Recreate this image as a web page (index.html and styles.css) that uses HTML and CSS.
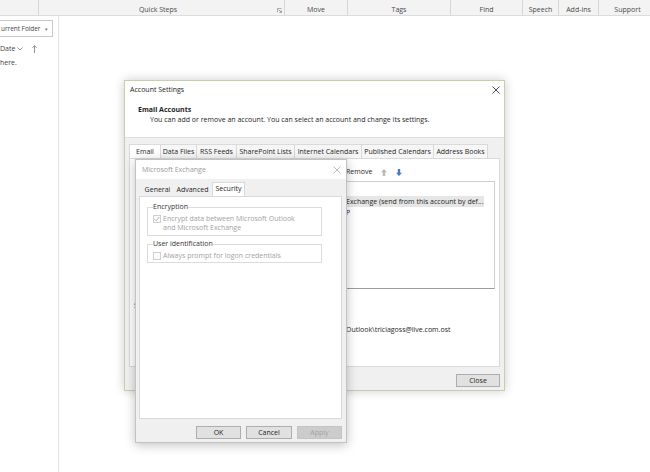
FILE: index.html
```html
<!DOCTYPE html>
<html lang="en">
<head>
<meta charset="utf-8">
<title>Account Settings</title>
<link rel="stylesheet" href="styles.css">
</head>
<body>
<div class="app">
  <header class="ribbon">
    <div class="grp grp-a"></div>
    <div class="grp grp-quick">
      <span class="grp-label">Quick Steps</span>
      <svg class="launcher" width="5" height="5" viewBox="0 0 5 5"><path d="M0.5 4.5V0.5H4.5" fill="none" stroke="#999" stroke-width="0.8"/><path d="M1.6 1.6L4.3 4.3M4.4 2.4V4.4H2.4" fill="none" stroke="#888" stroke-width="0.8"/></svg>
    </div>
    <div class="grp grp-move"><span class="grp-label">Move</span></div>
    <div class="grp grp-tags"><span class="grp-label">Tags</span></div>
    <div class="grp grp-find"><span class="grp-label">Find</span></div>
    <div class="grp grp-speech"><span class="grp-label">Speech</span></div>
    <div class="grp grp-addins"><span class="grp-label">Add-ins</span></div>
    <div class="grp grp-support"><span class="grp-label">Support</span></div>
  </header>

  <main class="workspace">
    <aside class="folder-pane">
      <div class="scope"><span class="scope-text">urrent Folder</span><span class="caret">&#9662;</span></div>
      <div class="sort">
        <span class="sort-text">Date</span>
        <svg class="chev" width="6" height="4" viewBox="0 0 6 4"><path d="M0.5 0.5L3 3L5.5 0.5" fill="none" stroke="#777" stroke-width="0.8"/></svg>
        <svg class="sort-arrow" width="5" height="8" viewBox="0 0 5 8"><path d="M2.5 8V0.8M0.4 2.8L2.5 0.6L4.6 2.8" fill="none" stroke="#777" stroke-width="0.8"/></svg>
      </div>
      <div class="empty">here.</div>
    </aside>
    <section class="reading"></section>
  </main>

  <div class="dlg acct">
    <div class="titlebar">
      <span class="title">Account Settings</span>
      <svg class="close" width="8" height="8" viewBox="0 0 8 8"><path d="M0.5 0.5L7.5 7.5M7.5 0.5L0.5 7.5" stroke="#333" stroke-width="0.9"/></svg>
    </div>
    <div class="hdr">
      <div class="hdr-title">Email Accounts</div>
      <div class="hdr-sub">You can add or remove an account. You can select an account and change its settings.</div>
    </div>
    <div class="acct-body">
      <div class="tabs">
        <div class="tab tab-sel w-email">Email</div>
        <div class="tab w-data">Data Files</div>
        <div class="tab w-rss">RSS Feeds</div>
        <div class="tab w-sp">SharePoint Lists</div>
        <div class="tab w-ic">Internet Calendars</div>
        <div class="tab w-pc">Published Calendars</div>
        <div class="tab w-ab">Address Books</div>
      </div>
      <div class="panel">
        <div class="toolbar">
          <div class="tb-hidden"></div>
          <span class="tb-remove">Remove</span>
          <svg class="tb-arrow" width="6" height="7" viewBox="0 0 6 7"><path d="M3 0L6 3.2H4.2V7H1.8V3.2H0Z" fill="#b9b9b9"/></svg>
          <svg class="tb-arrow" width="6" height="7" viewBox="0 0 6 7"><path d="M3 7L6 3.8H4.2V0H1.8V3.8H0Z" fill="#4a78c8"/></svg>
        </div>
        <div class="listbox">
          <div class="row row-sel"><span class="cell-name"></span><span class="cell-type">Exchange (send from this account by def...</span></div>
          <div class="row"><span class="cell-name"></span><span class="cell-type">P</span></div>
        </div>
        <div class="delivery">
          <div class="delivery-line"><span class="lead">S</span></div>
          <div class="delivery-line"></div>
          <div class="delivery-path"><span class="path-head"></span><span>Outlook\triciagoss@live.com.ost</span></div>
        </div>
      </div>
      <div class="footer acct-footer">
        <button class="btn btn-close">Close</button>
      </div>
    </div>
  </div>

  <div class="dlg exch">
    <div class="titlebar exch-title">
      <span class="title">Microsoft Exchange</span>
      <svg class="close" width="8" height="8" viewBox="0 0 8 8"><path d="M0.5 0.5L7.5 7.5M7.5 0.5L0.5 7.5" stroke="#b5b5b5" stroke-width="0.9"/></svg>
    </div>
    <div class="exch-body">
      <div class="tabs exch-tabs">
        <div class="etab w-gen">General</div>
        <div class="etab w-adv">Advanced</div>
        <div class="etab etab-sel w-sec">Security</div>
      </div>
      <div class="epanel">
        <fieldset class="group group-enc">
          <legend>Encryption</legend>
          <div class="check-row">
            <svg class="cb" width="8" height="8" viewBox="0 0 8 8"><rect x="0.5" y="0.5" width="7" height="7" fill="#fafafa" stroke="#cfcfcf"/><path d="M1.6 4.2L3.2 5.8L6.4 2" fill="none" stroke="#b2b2b2" stroke-width="0.9"/></svg>
            <span class="check-text">Encrypt data between Microsoft Outlook<br>and Microsoft Exchange</span>
          </div>
        </fieldset>
        <fieldset class="group group-user">
          <legend>User identification</legend>
          <div class="check-row">
            <svg class="cb" width="8" height="8" viewBox="0 0 8 8"><rect x="0.5" y="0.5" width="7" height="7" fill="#fafafa" stroke="#cfcfcf"/></svg>
            <span class="check-text">Always prompt for logon credentials</span>
          </div>
        </fieldset>
      </div>
      <div class="footer exch-footer">
        <button class="btn">OK</button>
        <button class="btn btn-cancel">Cancel</button>
        <button class="btn btn-disabled">Apply</button>
      </div>
    </div>
  </div>
</div>
</body>
</html>
```

FILE: styles.css
```css
* { box-sizing: border-box; }
html, body { margin: 0; padding: 0; }
body {
  width: 650px;
  height: 472px;
  overflow: hidden;
  background: #fff;
  font-family: "Open Sans", "Noto Sans", sans-serif;
  font-size: 7px;
  line-height: 10px;
  color: #1e1e1e;
}
.app { position: relative; width: 650px; height: 472px; overflow: hidden; }

/* Ribbon */
.ribbon {
  display: flex;
  height: 16px;
  background: #f3f3f3;
  border-bottom: 1px solid #dcdcdc;
  color: #4a4a4a;
}
.grp {
  display: flex;
  align-items: center;
  justify-content: center;
  border-left: 1px solid #d6d6d6;
  padding-top: 5px;
  flex: none;
}
.grp-label { white-space: nowrap; }
.grp-a { width: 38px; border-left: none; }
.grp-quick { width: 246px; }
.grp-quick .grp-label { flex: 1; text-align: center; }
.launcher { margin: 0 2px 0 0; }
.grp-move { width: 63px; }
.grp-tags { width: 103px; }
.grp-find { width: 72px; }
.grp-speech { width: 36px; }
.grp-addins { width: 40px; }
.grp-support { width: 58px; }

/* Workspace */
.workspace { display: flex; height: 456px; }
.folder-pane {
  width: 59px;
  flex: none;
  border-right: 1px solid #e1e1e1;
  overflow: hidden;
  padding-top: 4px;
  color: #444;
}
.scope {
  margin-left: -4px;
  width: 57px;
  height: 17px;
  border: 1px solid #c8c8c8;
  display: flex;
  align-items: center;
  padding-left: 4px;
  white-space: nowrap;
}
.scope-text { flex: 1; font-size: 6.4px; }
.caret { font-size: 5px; color: #777; margin-right: 4px; }
.sort { display: flex; align-items: center; height: 10px; margin-top: 7px; }
.chev { margin-left: 2px; }
.sort-arrow { margin-left: 9px; }
.empty { margin-top: 4px; white-space: nowrap; }
.reading { flex: 1; }

/* Dialogs */
.dlg { position: absolute; display: flex; flex-direction: column; background: #fff; }
.titlebar { display: flex; align-items: center; justify-content: space-between; flex: none; }
.title { white-space: nowrap; }

.acct {
  left: 124px;
  top: 80px;
  width: 381px;
  height: 311px;
  border: 1px solid #c5cfaa;
  box-shadow: 0 0 10px rgba(0, 0, 0, 0.2);
}
.acct .titlebar { height: 18px; padding: 0 4px 0 5px; }
.hdr {
  height: 39px;
  flex: none;
  padding: 6px 0 0 13px;
  border-bottom: 1px solid #dfdfdf;
}
.hdr-title { font-weight: 700; }
.hdr-sub { padding-left: 12px; white-space: nowrap; }
.acct-body {
  flex: 1;
  display: flex;
  flex-direction: column;
  background: #f0f0f0;
  padding: 6px 4px 0 4px;
}
.tabs { display: flex; flex: none; }
.acct-body .tabs { height: 14px; }
.tab {
  border: 1px solid #dadada;
  border-bottom: none;
  border-left: none;
  background: #f6f6f6;
  text-align: center;
  white-space: nowrap;
  padding-top: 2px;
}
.tab-sel { background: #fff; border-left: 1px solid #dadada; }
.w-email { width: 32px; }
.w-data { width: 36px; }
.w-rss { width: 40px; }
.w-sp { width: 58px; }
.w-ic { width: 67px; }
.w-pc { width: 72px; }
.w-ab { width: 54px; }
.panel {
  height: 209px;
  flex: none;
  background: #fff;
  border: 1px solid #d9d9d9;
  display: flex;
  flex-direction: column;
}
.toolbar { display: flex; align-items: center; height: 12px; margin-top: 7px; padding-left: 6px; }
.tb-hidden { width: 210px; flex: none; }
.tb-arrow { margin-left: 9px; }
.listbox {
  height: 108px;
  margin: 3px 4px 0 5px;
  border: 1px solid #cfcfcf;
  border-bottom-color: #9c9c9c;
  padding-top: 14px;
  flex: none;
}
.row { display: flex; height: 11px; line-height: 11px; width: 348px; white-space: nowrap; }
.row-sel { background: #e6e6e6; }
.cell-name { width: 210px; flex: none; }
.cell-type { overflow: hidden; }
.delivery { padding: 12px 0 0 4px; white-space: nowrap; }
.delivery-line { height: 12px; }
.delivery-path { display: flex; height: 12px; }
.path-head { width: 212px; flex: none; }

.footer { display: flex; justify-content: flex-end; gap: 5px; flex: none; }
.acct-footer { height: 23px; padding-top: 7px; }
.btn {
  font: inherit;
  line-height: 11px;
  color: #1e1e1e;
  height: 13px;
  padding: 0;
  background: #e1e1e1;
  border: 1px solid #adadad;
  border-radius: 0;
}
.btn-close { width: 44px; }

/* Microsoft Exchange dialog */
.exch {
  left: 135px;
  top: 159px;
  width: 212px;
  height: 284px;
  border: 1px solid #c2c2c2;
  box-shadow: 0 2px 10px rgba(0, 0, 0, 0.25);
}
.exch-title { height: 19px; padding: 0 5px 0 6px; color: #9a9a9a; }
.exch-body {
  flex: 1;
  display: flex;
  flex-direction: column;
  background: #f0f0f0;
  padding: 0 4px 0 3px;
}
.exch-tabs { height: 17px; padding: 4px 0 0 3px; align-items: flex-end; }
.etab { height: 12px; text-align: center; white-space: nowrap; padding-top: 1px; }
.etab-sel {
  height: 14px;
  background: #fff;
  border: 1px solid #d9d9d9;
  border-bottom: none;
  padding-top: 1px;
}
.w-gen { width: 31px; }
.w-adv { width: 39px; }
.w-sec { width: 33px; }
.epanel {
  height: 223px;
  flex: none;
  background: #fff;
  border: 1px solid #d9d9d9;
  padding: 5px 0 0 7px;
}
.group {
  margin: 0;
  width: 175px;
  border: 1px solid #dcdcdc;
  padding: 2px 4px 3px 5px;
  min-width: 0;
}
.group legend { padding: 0; color: #333; line-height: 10px; }
.group-user { margin-top: 3px; padding-bottom: 2px; }
.check-row { display: flex; align-items: flex-start; }
.cb { flex: none; margin-top: 1px; margin-right: 2px; }
.check-text { color: #a2a2a2; line-height: 9px; white-space: nowrap; }
.exch-footer { height: 23px; padding-top: 7px; }
.exch-footer .btn { width: 45px; }
.exch-footer .btn-cancel { width: 46px; }
.btn-disabled { background: #cccccc; border-color: #c4c4c4; color: #a3a3a3; }
```
